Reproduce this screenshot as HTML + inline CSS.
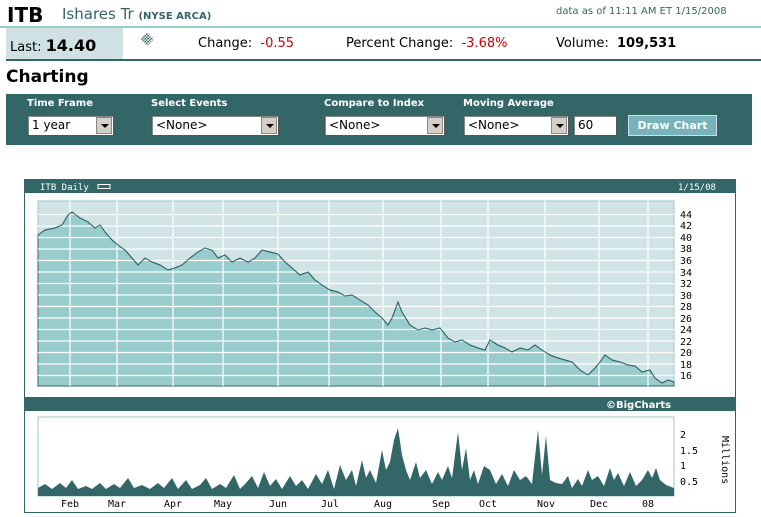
<!DOCTYPE html>
<html><head><style>
body{margin:0;width:761px;height:517px;background:#fff;font-family:"DejaVu Sans","Liberation Sans",sans-serif;position:relative;overflow:hidden}
.a{position:absolute;white-space:nowrap}
.sel{position:absolute;top:115px;height:19px;background:#fff;border:1px solid #555;box-shadow:inset 1px 1px 0 #888;font-size:12px;line-height:19px;padding-left:4px;box-sizing:border-box;height:21px}
.sel i{position:absolute;right:1px;top:1px;width:16px;height:17px;background:#d4d0c8;border:1px solid #888;box-sizing:border-box}
.sel i:after{content:"";position:absolute;left:4px;top:6px;border:4px solid transparent;border-top:4px solid #000;border-bottom:0}
.lb{position:absolute;top:98px;color:#fff;font-weight:bold;font-size:10px}
</style></head><body>
<div class="a" style="left:7px;top:3px;font-size:20px;font-weight:bold">ITB</div>
<div class="a" style="left:62px;top:5px;font-size:15px;color:#336666">Ishares Tr <b style="font-size:10px">(NYSE ARCA)</b></div>
<div class="a" style="left:556px;top:6px;font-size:10px;color:#336666">data as of 11:11 AM ET 1/15/2008</div>
<div class="a" style="left:0;top:26px;width:761px;height:2px;background:#99cccc"></div>
<div class="a" style="left:6px;top:28px;width:117px;height:32px;background:#cfe1e3"></div>
<div class="a" style="left:6px;top:59px;width:755px;height:2px;background:#336666"></div>
<div class="a" style="left:10px;top:36px;font-size:13px">Last: <b style="font-size:16px">14.40</b></div>
<div class="a" style="left:140px;top:32px;width:14px;height:14px;background:repeating-conic-gradient(#336666 0 25%,#fff 0 50%) 0 0/3px 3px;clip-path:polygon(50% 0,100% 50%,50% 100%,0 50%)"></div>
<div class="a" style="left:198px;top:36px;font-size:13px">Change: &nbsp;<b style="color:#cc0000;font-weight:normal">-0.55</b></div>
<div class="a" style="left:346px;top:36px;font-size:13px">Percent Change: &nbsp;<span style="color:#cc0000">-3.68%</span></div>
<div class="a" style="left:556px;top:36px;font-size:13px">Volume: &nbsp;<b>109,531</b></div>
<div class="a" style="left:6px;top:67px;font-size:17px;font-weight:bold">Charting</div>
<div class="a" style="left:6px;top:94px;width:746px;height:51px;background:#336666"></div>
<div class="lb" style="left:27px">Time Frame</div>
<div class="lb" style="left:151px">Select Events</div>
<div class="lb" style="left:324px">Compare to Index</div>
<div class="lb" style="left:463px">Moving Average</div>
<div class="sel" style="left:27px;width:87px">1 year<i></i></div>
<div class="sel" style="left:151px;width:128px">&lt;None&gt;<i></i></div>
<div class="sel" style="left:324px;width:121px">&lt;None&gt;<i></i></div>
<div class="sel" style="left:463px;width:106px">&lt;None&gt;<i></i></div>
<div class="sel" style="left:573px;width:44px">60</div>
<div class="a" style="left:628px;top:115px;width:89px;height:21px;background:#77b3b8;border:1px solid #cde;box-sizing:border-box;color:#fff;font-weight:bold;font-size:11px;text-align:center;line-height:19px">Draw Chart</div>

<svg class="a" style="left:0;top:0" width="761" height="517" font-family="DejaVu Sans Mono,Liberation Mono,monospace">
<rect x="24.5" y="179.5" width="711" height="333" fill="#fff" stroke="#336666"/>
<rect x="24" y="179" width="712" height="14" fill="#336666"/>
<text x="40" y="190" font-size="9" fill="#fff">ITB Daily</text>
<rect x="98" y="184.5" width="12" height="4" fill="none" stroke="#fff"/>
<text x="678" y="190" font-size="9" fill="#fff">1/15/08</text>
<rect x="38" y="201" width="636" height="185" fill="#d0e3e5" stroke="#99c8c8"/>
<polygon fill="#99cccc" stroke="#336666" stroke-width="1" points="38,386 38,235 45,230 55,228 62,225 68,215 72,212 80,218 88,222 95,228 100,225 105,232 112,240 118,245 125,250 132,258 138,265 145,258 152,262 160,265 168,270 175,268 182,265 190,258 198,252 205,248 212,250 218,258 225,255 232,262 240,258 248,262 255,258 262,250 270,252 278,254 285,262 292,268 300,275 308,272 315,280 322,285 330,290 338,292 345,296 352,295 360,300 368,305 375,312 382,318 388,325 392,318 398,302 402,312 410,325 418,330 425,328 432,330 440,328 448,338 455,342 462,340 470,345 478,348 485,350 490,340 498,345 505,348 512,352 520,348 528,350 535,345 542,350 550,355 558,358 565,360 572,362 580,370 588,375 595,368 600,362 605,355 612,360 620,362 628,365 635,366 642,372 650,370 655,378 662,383 668,380 674,382 674,386"/>
<g stroke="#fff" stroke-width="1.2">
<path d="M38 214.5H674M38 226H674M38 237.5H674M38 249H674M38 260.5H674M38 272H674M38 283.5H674M38 295H674M38 306.5H674M38 318H674M38 329.5H674M38 341H674M38 352.5H674M38 364H674M38 375.5H674"/>
<path d="M70 201V386M117 201V386M173 201V386M223 201V386M278 201V386M329 201V386M383 201V386M441 201V386M488 201V386M545 201V386M599 201V386M648 201V386"/>
<path d="M70 417V496M117 417V496M173 417V496M223 417V496M278 417V496M329 417V496M383 417V496M441 417V496M488 417V496M545 417V496M599 417V496M648 417V496M38 434H674M38 450H674M38 465H674M38 481H674"/>
</g>
<polyline fill="none" stroke="#336666" points="38,235 45,230 55,228 62,225 68,215 72,212 80,218 88,222 95,228 100,225 105,232 112,240 118,245 125,250 132,258 138,265 145,258 152,262 160,265 168,270 175,268 182,265 190,258 198,252 205,248 212,250 218,258 225,255 232,262 240,258 248,262 255,258 262,250 270,252 278,254 285,262 292,268 300,275 308,272 315,280 322,285 330,290 338,292 345,296 352,295 360,300 368,305 375,312 382,318 388,325 392,318 398,302 402,312 410,325 418,330 425,328 432,330 440,328 448,338 455,342 462,340 470,345 478,348 485,350 490,340 498,345 505,348 512,352 520,348 528,350 535,345 542,350 550,355 558,358 565,360 572,362 580,370 588,375 595,368 600,362 605,355 612,360 620,362 628,365 635,366 642,372 650,370 655,378 662,383 668,380 674,382"/>
<g font-size="10" fill="#000">
<text x="680" y="218">44</text><text x="680" y="229">42</text><text x="680" y="241">40</text><text x="680" y="252">38</text><text x="680" y="264">36</text><text x="680" y="276">34</text><text x="680" y="287">32</text><text x="680" y="299">30</text><text x="680" y="310">28</text><text x="680" y="322">26</text><text x="680" y="333">24</text><text x="680" y="345">22</text><text x="680" y="356">20</text><text x="680" y="368">18</text><text x="680" y="379">16</text>
<text x="680" y="438">2</text><text x="680" y="469">1</text><text x="680" y="454">1.5</text><text x="680" y="485">0.5</text>
<text x="722" y="436" transform="rotate(90 722 436)">Millions</text>
<text x="61" y="507">Feb</text><text x="108" y="507">Mar</text><text x="164" y="507">Apr</text><text x="214" y="507">May</text><text x="269" y="507">Jun</text><text x="321" y="507">Jul</text><text x="374" y="507">Aug</text><text x="432" y="507">Sep</text><text x="479" y="507">Oct</text><text x="537" y="507">Nov</text><text x="590" y="507">Dec</text><text x="642" y="507">08</text>
</g>
<rect x="24" y="397" width="712" height="14" fill="#336666"/>
<text x="606" y="408" font-size="10" font-weight="bold" fill="#fff" font-family="DejaVu Sans,sans-serif">©BigCharts</text>
<rect x="38" y="417" width="636" height="79" fill="none" stroke="#99c8c8"/>
<polygon fill="#336666" points="38,496 38,488 45,484 52,489 60,483 66,488 72,480 78,489 86,486 92,489 100,483 106,489 114,484 120,488 128,478 134,488 142,485 150,489 158,483 164,488 172,478 178,489 186,480 192,489 200,485 206,478 212,489 220,484 226,488 234,475 240,489 246,483 252,476 258,488 264,472 270,486 276,479 282,489 290,476 296,486 302,480 308,489 316,474 322,484 328,470 334,489 340,465 346,480 352,470 356,486 362,460 366,478 370,470 376,483 382,450 386,470 390,462 394,440 398,428 402,455 406,470 410,480 416,462 420,478 426,470 432,484 438,472 442,480 448,466 452,478 458,432 462,470 466,448 470,480 474,470 478,484 484,466 490,470 496,484 502,474 508,486 514,470 520,480 526,476 532,484 538,430 542,475 546,436 550,480 556,483 562,484 568,476 572,488 578,479 582,486 588,470 592,480 598,476 604,486 610,468 614,480 618,473 624,486 630,472 636,486 642,480 648,470 652,478 656,468 660,480 666,485 674,488 674,496"/>
</svg>
</body></html>
